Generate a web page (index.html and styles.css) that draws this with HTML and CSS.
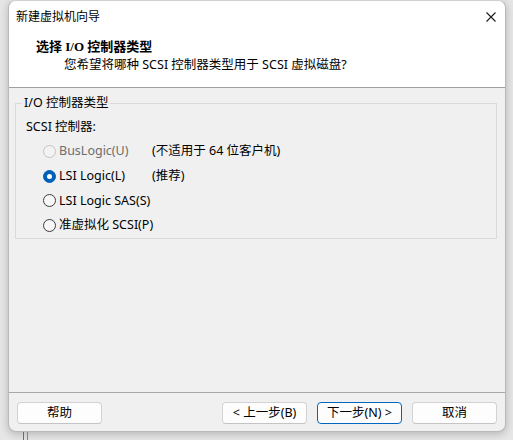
FILE: index.html
```html
<!DOCTYPE html>
<html lang="zh-CN">
<head>
<meta charset="utf-8">
<title>新建虚拟机向导</title>
<link rel="stylesheet" href="styles.css">
</head>
<body>
<div class="dialog">
  <div class="header">
    <div class="titlebar">
      <span class="title-text">新建虚拟机向导</span>
      <svg class="close" width="10" height="10" viewBox="0 0 10 10"><path d="M0.5 0.5 L9.5 9.5 M9.5 0.5 L0.5 9.5" stroke="#1a1a1a" stroke-width="1.1" fill="none"/></svg>
    </div>
    <div class="page-title">选择 I/O 控制器类型</div>
    <div class="page-sub">您希望将哪种 SCSI 控制器类型用于 SCSI 虚拟磁盘?</div>
  </div>
  <div class="body">
    <fieldset class="group">
      <legend>I/O 控制器类型</legend>
      <div class="group-label">SCSI 控制器:</div>
      <div class="options">
        <div class="opt disabled"><span class="radio"></span><span class="opt-label">BusLogic(U)</span><span class="note">(不适用于 64 位客户机)</span></div>
        <div class="opt"><span class="radio checked"></span><span class="opt-label">LSI Logic(L)</span><span class="note">(推荐)</span></div>
        <div class="opt"><span class="radio"></span><span class="opt-label">LSI Logic SAS(S)</span><span class="note"></span></div>
        <div class="opt"><span class="radio"></span><span class="opt-label">准虚拟化 SCSI(P)</span><span class="note"></span></div>
      </div>
    </fieldset>
  </div>
  <div class="footer">
    <button class="btn">帮助</button>
    <div class="spacer"></div>
    <button class="btn">&lt; 上一步(B)</button>
    <button class="btn focused">下一步(N) &gt;</button>
    <button class="btn">取消</button>
  </div>
</div>
<div class="behind"></div>
</body>
</html>
```
FILE: styles.css
```css
html, body {
  margin: 0;
  padding: 0;
}
body {
  background: #e6e6e6;
  width: 513px;
  height: 440px;
  overflow: hidden;
  font-family: "Noto Sans", "Noto Sans CJK SC", sans-serif;
  font-size: 12.5px;
  color: #000;
}
.dialog {
  margin-left: 8px;
  width: 498px;
  height: 432px;
  box-sizing: border-box;
  border: 1px solid #b9b9b9;
  border-top-color: #d0d0d0;
  border-radius: 8px;
  background: #f0f0f0;
  box-shadow: 0 2px 8px rgba(0,0,0,0.22);
  overflow: hidden;
  display: flex;
  flex-direction: column;
}
.header {
  background: #fff;
  height: 87px;
  box-sizing: border-box;
  border-bottom: 1px solid #a0a0a0;
  flex: none;
}
.titlebar {
  height: 30px;
  display: flex;
  align-items: center;
  padding-left: 7px;
  padding-right: 9px;
  box-sizing: border-box;
}
.title-text {
  flex: 1;
  line-height: 16px;
  padding-top: 1px;
  font-size: 12px;
}
.close {
  display: block;
  margin-top: 1px;
}
.page-title {
  margin-top: 7px;
  padding-left: 27px;
  line-height: 18px;
  font-weight: bold;
  font-family: "Liberation Serif", "Noto Sans CJK SC", serif;
  font-size: 13px;
}
.page-sub {
  padding-left: 55px;
  line-height: 18px;
}
.body {
  flex: 1;
  padding: 7px 8px 0 6px;
}
.group {
  margin: 0;
  padding: 0 0 0 10px;
  border: 1px solid #dadada;
  min-width: 0;
  height: 144px;
  box-sizing: border-box;
}
.group legend {
  padding: 0 2px;
  margin-left: -4px;
  line-height: 16px;
}
.group-label {
  margin-top: 8px;
  line-height: 16px;
}
.options {
  margin-top: 4px;
  padding-left: 17px;
}
.opt {
  height: 24.7px;
  display: flex;
  align-items: center;
}
.radio {
  width: 13px;
  height: 13px;
  box-sizing: border-box;
  border-radius: 50%;
  border: 1px solid #3c3c3c;
  background: #f7f7f7;
  flex: none;
  margin-right: 3px;
  display: flex;
  align-items: center;
  justify-content: center;
}
.radio.checked {
  background: #005fb8;
  border-color: #005fb8;
}
.radio.checked::after {
  content: "";
  width: 5px;
  height: 5px;
  border-radius: 50%;
  background: #fff;
}
.disabled .radio {
  border-color: #c4c4c4;
  background: #f3f3f3;
}
.disabled .opt-label {
  color: #6d6d6d;
}
.opt-label {
  width: 93px;
  flex: none;
  line-height: 16px;
  white-space: nowrap;
}
.note {
  line-height: 16px;
}
.footer {
  flex: none;
  height: 39px;
  box-sizing: border-box;
  border-top: 1px solid #a8a8a8;
  display: flex;
  align-items: flex-start;
  padding: 9px 8px 0 8px;
  gap: 10px;
}
.spacer {
  flex: 1;
}
.btn {
  width: 85px;
  height: 22px;
  box-sizing: border-box;
  border: 1px solid #d2d2d2;
  border-bottom-color: #c4c4c4;
  border-radius: 4px;
  background: #fdfdfd;
  font-family: inherit;
  font-size: 12.5px;
  color: #000;
  padding: 0;
  line-height: 18px;
}
.btn.focused {
  border: 1px solid #0067c0;
}
.behind {
  margin-left: 23px;
  width: 3px;
  height: 8px;
  border-left: 1px solid #6a6a6a;
  border-right: 1px solid #6b8a9c;
}
```
